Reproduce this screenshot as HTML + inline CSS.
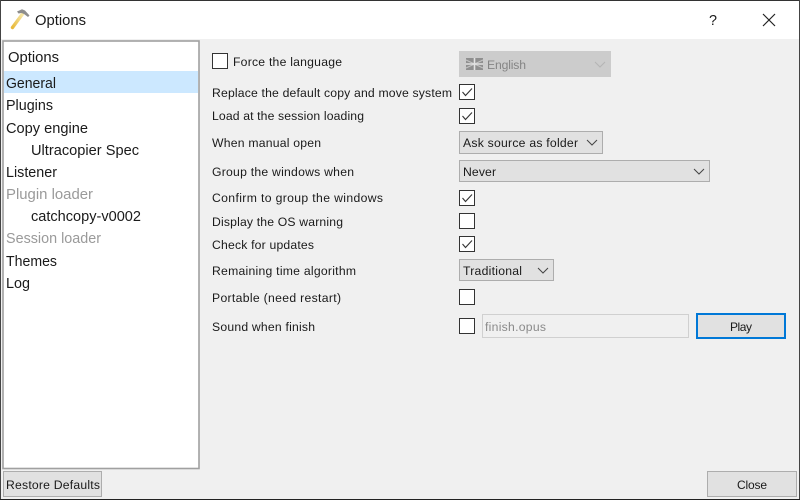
<!DOCTYPE html>
<html><head><meta charset="utf-8"><style>
html,body{margin:0;padding:0;background:#f0f0f0}
svg{display:block}
text{font-family:"Liberation Sans",sans-serif;fill:#1a1a1a}
.l{font-size:14.5px}
.s{font-size:12.2px}
.g{fill:#9a9a9a}
</style></head><body>
<svg width="800" height="500" viewBox="0 0 800 500" xmlns="http://www.w3.org/2000/svg">
<defs><linearGradient id="h" x1="0" y1="1" x2="1" y2="0"><stop offset="0" stop-color="#e8b93a"/><stop offset="1" stop-color="#f6e7a8"/></linearGradient></defs>
<rect width="800" height="500" fill="#f0f0f0"/>
<rect width="800" height="39" fill="#fff"/>
<rect x="0" y="0" width="800" height="1" fill="#333"/>
<rect x="0" y="0" width="1" height="500" fill="#444"/>
<rect x="799" y="0" width="1" height="500" fill="#444"/>
<rect x="0" y="499" width="800" height="1" fill="#222"/>
<!-- title icon -->
<path d="M12.5 27.5 L22.5 14" stroke="url(#h)" stroke-width="3.4" stroke-linecap="round" fill="none"/>
<path d="M17 11.5 L22 9.2 L25 10.5 L29.5 15.5 L28 17 L24 14 L21.5 13 L18.5 13.5 Z" fill="#8d8d8d"/>
<text x="35" y="25" font-size="14.5" textLength="51" lengthAdjust="spacingAndGlyphs">Options</text>
<text x="709" y="25" font-size="15" textLength="8" lengthAdjust="spacingAndGlyphs">?</text>
<path d="M763 14 L775 26 M775 14 L763 26" stroke="#222" stroke-width="1.2" fill="none"/>
<!-- list -->
<rect x="3" y="41" width="196" height="427.5" fill="#fff" stroke="#a0a0a0" stroke-width="1.6"/>
<rect x="4" y="71" width="194" height="22" fill="#cce8ff"/>
<text class="l" x="8" y="62" textLength="51" lengthAdjust="spacingAndGlyphs">Options</text>
<text class="l" x="6" y="88" textLength="50" lengthAdjust="spacingAndGlyphs">General</text>
<text class="l" x="6" y="110" textLength="47" lengthAdjust="spacingAndGlyphs">Plugins</text>
<text class="l" x="6" y="133" textLength="82" lengthAdjust="spacingAndGlyphs">Copy engine</text>
<text class="l" x="31" y="155" textLength="108" lengthAdjust="spacingAndGlyphs">Ultracopier Spec</text>
<text class="l" x="6" y="177" textLength="51" lengthAdjust="spacingAndGlyphs">Listener</text>
<text class="l g" x="6" y="199" textLength="87" lengthAdjust="spacingAndGlyphs">Plugin loader</text>
<text class="l" x="31" y="221" textLength="110" lengthAdjust="spacingAndGlyphs">catchcopy-v0002</text>
<text class="l g" x="6" y="243" textLength="95" lengthAdjust="spacingAndGlyphs">Session loader</text>
<text class="l" x="6" y="266" textLength="51" lengthAdjust="spacingAndGlyphs">Themes</text>
<text class="l" x="6" y="288" textLength="24" lengthAdjust="spacingAndGlyphs">Log</text>
<!-- labels -->
<text class="s" x="233" y="66" textLength="109" lengthAdjust="spacing">Force the language</text>
<text class="s" x="212" y="97" textLength="240" lengthAdjust="spacing">Replace the default copy and move system</text>
<text class="s" x="212" y="120" textLength="152" lengthAdjust="spacing">Load at the session loading</text>
<text class="s" x="212" y="147" textLength="109" lengthAdjust="spacing">When manual open</text>
<text class="s" x="212" y="176" textLength="142" lengthAdjust="spacing">Group the windows when</text>
<text class="s" x="212" y="202" textLength="171" lengthAdjust="spacing">Confirm to group the windows</text>
<text class="s" x="212" y="226" textLength="131" lengthAdjust="spacing">Display the OS warning</text>
<text class="s" x="212" y="249" textLength="102" lengthAdjust="spacing">Check for updates</text>
<text class="s" x="212" y="275" textLength="144" lengthAdjust="spacing">Remaining time algorithm</text>
<text class="s" x="212" y="302" textLength="129" lengthAdjust="spacing">Portable (need restart)</text>
<text class="s" x="212" y="331" textLength="103" lengthAdjust="spacing">Sound when finish</text>
<!-- checkboxes -->
<g fill="#fff" stroke="#333">
<rect x="212.5" y="53.5" width="15" height="15"/>
<rect x="459.5" y="84.5" width="15" height="15"/>
<rect x="459.5" y="108.5" width="15" height="15"/>
<rect x="459.5" y="190.5" width="15" height="15"/>
<rect x="459.5" y="213.5" width="15" height="15"/>
<rect x="459.5" y="236.5" width="15" height="15"/>
<rect x="459.5" y="289.5" width="15" height="15"/>
<rect x="459.5" y="318.5" width="15" height="15"/>
</g>
<g fill="none" stroke="#333" stroke-width="1.1">
<path d="M462.5 92 L465.5 95.5 L472 88.5"/>
<path d="M462.5 116 L465.5 119.5 L472 112.5"/>
<path d="M462.5 198 L465.5 201.5 L472 194.5"/>
<path d="M462.5 244 L465.5 247.5 L472 240.5"/>
</g>
<!-- English disabled combo -->
<rect x="459" y="51" width="152" height="26" fill="#cccccc"/>
<rect x="466" y="58" width="17" height="12" fill="#8f8f8f"/>
<path d="M466 60 L483 68 M483 60 L466 68" stroke="#c4c4c4" stroke-width="1"/>
<path d="M474.5 58 V70 M466 64 H483" stroke="#e2e2e2" stroke-width="1.6"/>
<text class="s" x="487" y="69" textLength="39" lengthAdjust="spacing" style="fill:#858585">English</text>
<path d="M595 62 L600 67 L605 62" fill="none" stroke="#b4b4b4"/>
<!-- combos -->
<g fill="#e1e1e1" stroke="#adadad">
<rect x="459.5" y="131.5" width="143" height="22"/>
<rect x="459.5" y="160.5" width="250" height="21"/>
<rect x="459.5" y="259.5" width="94" height="21"/>
</g>
<text class="s" x="463" y="147" textLength="115" lengthAdjust="spacing">Ask source as folder</text>
<text class="s" x="463" y="176" textLength="33" lengthAdjust="spacing">Never</text>
<text class="s" x="463" y="275" textLength="59" lengthAdjust="spacing">Traditional</text>
<g fill="none" stroke="#444">
<path d="M587 140 L592 145 L597 140"/>
<path d="M694 169 L699 174 L704 169"/>
<path d="M538 268 L543 273 L548 268"/>
</g>
<!-- line edit -->
<rect x="482.5" y="314.5" width="206" height="23" fill="#f0f0f0" stroke="#d0d0d0"/>
<text class="s" x="485" y="331" textLength="61" lengthAdjust="spacing" style="fill:#8a8a8a">finish.opus</text>
<!-- buttons -->
<rect x="697" y="314" width="88" height="24" fill="#e1e1e1" stroke="#0078d7" stroke-width="2"/>
<text x="730" y="331" font-size="12" textLength="22" lengthAdjust="spacing">Play</text>
<rect x="3.5" y="471.5" width="98" height="25" fill="#e1e1e1" stroke="#adadad"/>
<text class="s" x="6" y="489" textLength="94" lengthAdjust="spacing">Restore Defaults</text>
<rect x="707.5" y="471.5" width="89" height="25" fill="#e1e1e1" stroke="#adadad"/>
<text x="737" y="489" font-size="12" textLength="30" lengthAdjust="spacing">Close</text>
</svg>
</body></html>
